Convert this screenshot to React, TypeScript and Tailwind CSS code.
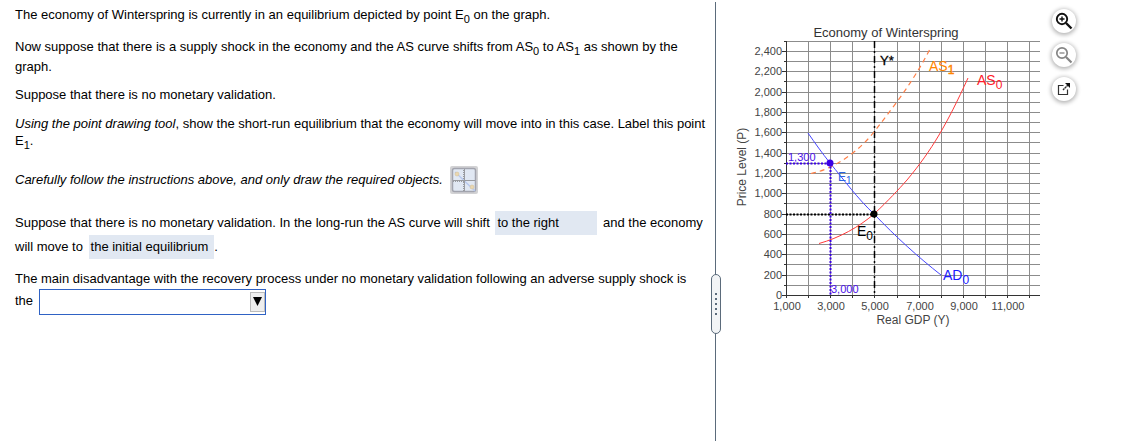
import React from "react";

const minorX = Array.from({ length: 12 }, (_, i) => Math.round(50 + i * 22.1));
const minorY = Array.from({ length: 26 }, (_, i) => Math.round(275 - i * 10.17));
const xTicks = ["1,000", "3,000", "5,000", "7,000", "9,000", "11,000"];

function EquilibriumChart() {
  return (
    <svg
      className="mt-5 h-[316px] w-[308px] shrink-0 font-['Liberation_Sans',Arial,sans-serif]"
      viewBox="0 0 308 316"
      role="img"
      aria-label="Economy of Winterspring"
    >
      <g stroke="#8c8c8c" strokeWidth="1" shapeRendering="crispEdges">
        {minorX.slice(1).map((x) => (
          <line key={x} x1={x + 0.5} x2={x + 0.5} y1="21" y2="275" />
        ))}
        {minorY.slice(1).map((y) => (
          <line key={y} x1="50" x2="304" y1={y + 0.5} y2={y + 0.5} />
        ))}
      </g>
      <g stroke="#333" shapeRendering="crispEdges">
        <line x1="50.5" x2="50.5" y1="21" y2="276" />
        <line x1="50" x2="304" y1="275.5" y2="275.5" />
        {minorX.map((x) => (
          <line key={x} x1={x + 0.5} x2={x + 0.5} y1="275" y2="278" />
        ))}
        {minorY.map((y, i) => (
          <line key={y} x1={i % 2 ? 48 : 46} x2="50" y1={y + 0.5} y2={y + 0.5} />
        ))}
      </g>
      <text x="150" y="17" fontSize="13" textAnchor="middle" fill="#333">
        Economy of Winterspring
      </text>
      <g fontSize="11" fill="#444">
        {minorY
          .filter((_, i) => i % 2 === 0)
          .map((y, i) => (
            <text key={y} x="46" y={y + 4} textAnchor="end">
              {(i * 200).toLocaleString("en-US")}
            </text>
          ))}
        {xTicks.map((t, i) => (
          <text key={t} x={minorX[i * 2] + 1} y="290" textAnchor="middle">
            {t}
          </text>
        ))}
      </g>
      <g fontSize="12" fill="#444">
        <text x="177" y="304" textAnchor="middle">
          Real GDP (Y)
        </text>
        <text transform="translate(10 147) rotate(-90)" textAnchor="middle">
          Price Level (P)
        </text>
      </g>
      <path
        d="M138.500 21V275"
        stroke="#000"
        strokeWidth="1.500"
        strokeDasharray="7 3 2 3"
      />
      <path d="M50 194.500H138" stroke="#000" strokeWidth="2" strokeDasharray="2 1.500" />
      <path
        d="M72 113 C79 123 86 133 94 143 C108 160 122 179 138 194 C160 217 182 237 205 255"
        fill="none"
        stroke="#4646ff"
      />
      <path
        d="M83 223.500 C103 218 123 207 138 194 C152 181 163 169 171 160 C196 130 211 104 232 58"
        fill="none"
        stroke="#ff3a3a"
      />
      <path
        d="M75 153.500 C99 149 124 130 138 112 C162 81 178 60 194 29"
        fill="none"
        stroke="#ff8048"
        strokeDasharray="5 4"
        strokeWidth="1.200"
      />
      <g stroke="#3a00e6" strokeWidth="2" strokeDasharray="2 1.500">
        <path d="M50 143.500H94" />
        <path d="M94.500 143V275" />
      </g>
      <circle cx="94" cy="143" r="3.500" fill="#3a00e6" />
      <circle cx="138" cy="194" r="3.500" fill="#000" />
      <g fontSize="11" fill="#4a10e8">
        <text x="52" y="141">1,300</text>
        <text x="95" y="273">3,000</text>
      </g>
      <text x="102" y="161" fontSize="12" fill="#2a64e0">
        E<tspan fontSize="10" dy="3">1</tspan>
      </text>
      <text x="144" y="45" fontSize="13" fill="#000" stroke="#000" strokeWidth="0.300">Y*</text>
      <text x="193" y="51" fontSize="14" fill="#ff8400">
        AS<tspan fontSize="12" dy="3" stroke="#ff8400" strokeWidth="0.400">1</tspan>
      </text>
      <text x="241" y="65" fontSize="14" fill="#ff1a2a">
        AS<tspan fontSize="12" dy="4">0</tspan>
      </text>
      <text x="121" y="216" fontSize="14" fill="#000">
        E<tspan fontSize="12" dy="4">0</tspan>
      </text>
      <text x="207" y="260" fontSize="14" fill="#1a1aff">
        AD<tspan fontSize="12" dy="4">0</tspan>
      </text>
    </svg>
  );
}

function RoundButton({ label, children }: { label: string; children: React.ReactNode }) {
  return (
    <button
      type="button"
      aria-label={label}
      className="flex size-6 items-center justify-center rounded-full bg-white shadow-[0_1px_4px_1px_rgba(0,0,0,0.3)]"
    >
      {children}
    </button>
  );
}

function ChartTools() {
  return (
    <div className="mt-[9px] flex shrink-0 flex-col gap-[10px]">
      <RoundButton label="Zoom in">
        <svg width="18" height="18" viewBox="0 0 18 18" fill="none" stroke="#111">
          <circle cx="7" cy="7" r="5.200" strokeWidth="1.900" />
          <path d="M11 11L16.500 16.500" strokeWidth="2.400" />
          <path d="M4.500 7h5M7 4.500v5" strokeWidth="1.400" />
        </svg>
      </RoundButton>
      <RoundButton label="Zoom out">
        <svg width="18" height="18" viewBox="0 0 18 18" fill="none" stroke="#858585">
          <circle cx="7" cy="7" r="5.200" strokeWidth="1.700" />
          <path d="M11 11L16.500 16.500" strokeWidth="2.200" />
          <path d="M4.500 7h5" strokeWidth="1.300" />
        </svg>
      </RoundButton>
      <RoundButton label="Open in new window">
        <svg width="14" height="14" viewBox="0 0 14 14" fill="none" stroke="#333">
          <path d="M6.500 3.500H1.500V12.500H10.500V7.500" strokeWidth="1.200" />
          <path d="M6 8L11 3" strokeWidth="1.400" strokeDasharray="2 0.500" />
          <path d="M8 1H13V6Z" fill="#111" stroke="none" />
        </svg>
      </RoundButton>
    </div>
  );
}

function GraphToolButton() {
  return (
    <button type="button" aria-label="Open graph drawing tool" className="size-7">
      <svg width="28" height="28" viewBox="0 0 28 28">
        <rect width="28" height="28" rx="2" fill="#d2d2d4" />
        <rect x="2.500" y="2.500" width="23" height="23" rx="2" fill="#e1e8f3" stroke="#a2a4ae" strokeWidth="1.500" />
        <path d="M5 6L25 25" stroke="#b7c8ee" strokeWidth="1.300" />
        <path d="M14.500 3V25M3 14.500H25" stroke="#999ba0" strokeWidth="1" />
        <path d="M13.500 4V25M3 15.500H14" stroke="#999ba0" strokeWidth="1" strokeDasharray="1 1" />
        <circle cx="7" cy="8" r="2" fill="#ead7b0" stroke="#d0bd95" strokeWidth="0.500" />
        <circle cx="22" cy="21" r="2" fill="#ead7b0" stroke="#d0bd95" strokeWidth="0.500" />
      </svg>
    </button>
  );
}

function Question() {
  return (
    <section className="w-[62.55%] shrink-0 pt-[5px] pr-2 pl-[15px] text-[13px] leading-5 [&_sub]:-bottom-1 [&_sub]:text-[11px]">
      <p>
        The economy of Winterspring is currently in an equilibrium depicted by point E<sub>0</sub> on the graph.
      </p>
      <p className="mt-3">
        Now suppose that there is a supply shock in the economy and the AS curve shifts from AS<sub>0</sub> to AS
        <sub>1</sub> as shown by the graph.
      </p>
      <p className="mt-2">Suppose that there is no monetary validation.</p>
      <p className="mt-[10px] leading-[17px]">
        <i>Using the point drawing tool</i>, show the short-run equilibrium that the economy will move into in this
        case. Label this point E<sub>1</sub>.
      </p>
      <div className="mt-[17px] flex items-center gap-[7px]">
        <i>Carefully follow the instructions above, and only draw the required objects.</i>
        <GraphToolButton />
      </div>
      <p className="mt-[17px] leading-6">
        Suppose that there is no monetary validation. In the long-run the AS curve will shift{" "}
        <span className="mx-[2px] inline-block w-[102px] bg-[#e1e8f2] px-[2px]">to the right</span> and the economy
        will move to{" "}
        <span className="ml-[2px] inline-block bg-[#e1e8f2] pr-[6px] pl-[2px]">the initial equilibrium</span>.
      </p>
      <div className="mt-[10px]">
        <label htmlFor="disadvantage">
          The main disadvantage with the recovery process under no monetary validation following an adverse supply
          shock is the
        </label>{" "}
        <span className="relative ml-[2px] inline-flex align-middle">
          <select
            id="disadvantage"
            defaultValue=""
            className="h-[26px] w-[227px] appearance-none border border-[#2f62c4] bg-white px-1"
          >
            <option value=""></option>
          </select>
          <span className="pointer-events-none absolute top-[3px] right-[1px] flex h-5 w-[15px] justify-center border border-[#bbb] bg-[#eee] pt-1">
            <svg width="9" height="9" viewBox="0 0 9 9">
              <path d="M0 0H9L4.500 9Z" fill="#000" />
            </svg>
          </span>
        </span>
      </div>
    </section>
  );
}

function Splitter() {
  return (
    <div className="relative mt-[2px] w-px shrink-0 bg-[#5b6b7b]">
      <button
        type="button"
        aria-label="Resize panels"
        className="absolute top-[272px] -left-1 flex h-[60px] w-[10px] flex-col items-center justify-center gap-[3px] rounded-[5px] border border-[#5b6b7b] bg-[#f2f4f6]"
      >
        {[0, 1, 2, 3, 4].map((i) => (
          <span key={i} className="size-[2px] bg-[#5b6b7b]" />
        ))}
      </button>
    </div>
  );
}

export default function App() {
  return (
    <main className="flex min-h-screen bg-white font-['Liberation_Sans',Arial,sans-serif] text-black">
      <Question />
      <Splitter />
      <aside className="flex flex-1 items-start gap-2 pl-5">
        <EquilibriumChart />
        <ChartTools />
      </aside>
    </main>
  );
}
